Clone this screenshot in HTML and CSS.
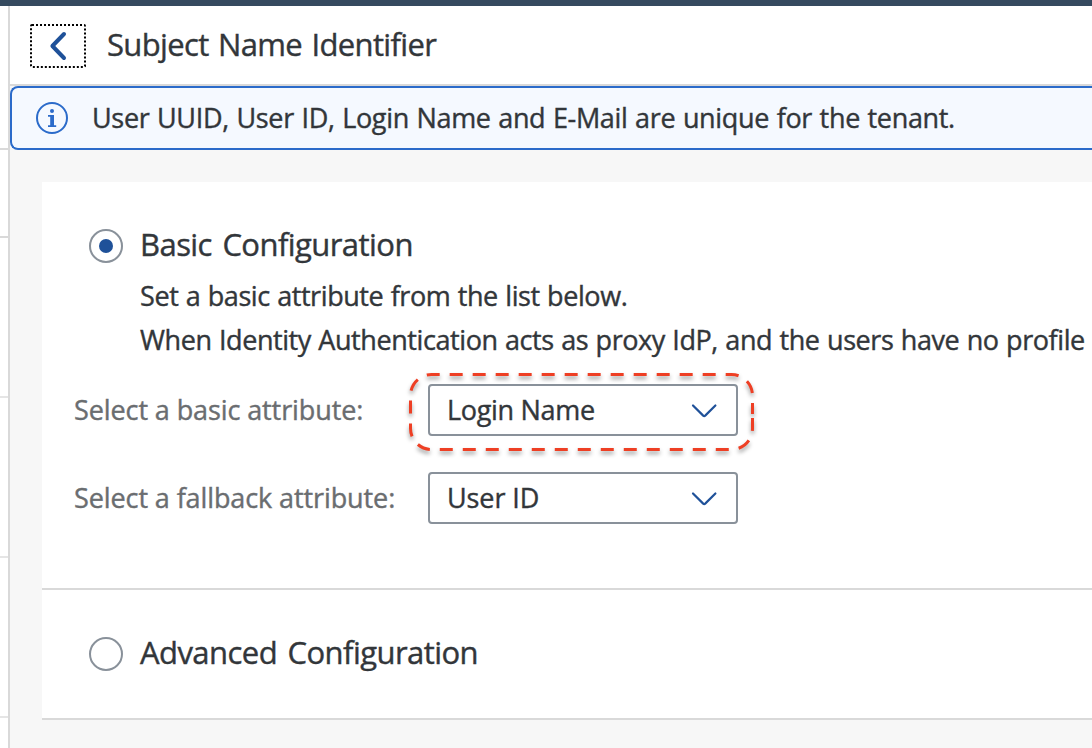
FILE: index.html
```html
<!DOCTYPE html>
<html lang="en">
<head>
<meta charset="utf-8">
<title>Subject Name Identifier</title>
<link rel="stylesheet" href="styles.css">
</head>
<body>
<div class="app">
  <div class="shellbar"></div>
  <div class="columns">
    <aside class="master">
      <div class="master-head"></div>
      <div class="master-item first"></div>
      <div class="master-item"></div>
      <div class="master-item"></div>
      <div class="master-item"></div>
    </aside>
    <main class="detail">
      <header class="page-header">
        <button class="back" aria-label="Back">
          <svg width="56" height="44" viewBox="0 0 56 44"><rect class="focus" x="1" y="1" width="54" height="42" rx="1"/><path class="back-arrow" d="M34 10 L22.4 22 L34 34"/></svg>
        </button>
        <h1 class="title"><span class="t-title">Subject Name Identifier</span></h1>
      </header>
      <div class="message">
        <svg class="info" width="32" height="32" viewBox="0 0 32 32"><circle cx="16" cy="16" r="15"/><circle class="dot" cx="16" cy="9" r="2"/><path d="M12 13h6v10.2h2.2V25H12v-1.8h2.2v-8.400H12z"/></svg>
        <span class="t-message">User UUID, User ID, Login Name and E-Mail are unique for the tenant.</span>
      </div>
      <div class="content">
        <section class="panel basic">
          <div class="option"><span class="radio on"></span><h2 class="heading"><span class="t-basic">Basic Configuration</span></h2></div>
          <p class="text"><span class="t-set">Set a basic attribute from the list below.</span></p>
          <p class="text"><span class="t-when">When Identity Authentication acts as proxy IdP, and the users have no profile</span></p>
          <div class="field">
            <label class="label"><span class="t-label1">Select a basic attribute:</span></label>
            <div class="select"><span class="t-login">Login Name</span>
              <svg class="chevron" width="28" height="16" viewBox="0 0 28 16"><path d="M3 3.500 L13.200 13.600 Q14.200 14.500 15.200 13.600 L25.400 3.500"/></svg>
              <svg class="highlight" width="352" height="90" viewBox="405 368 352 90"><path d="M752.5 418V428.5A21 21 0 0 1 731.5 449.5H431.5A21 21 0 0 1 410.5 428.5V395.5A21 21 0 0 1 431.5 374.5H731.5A21 21 0 0 1 752.5 395.5V414"/></svg>
            </div>
          </div>
          <div class="field">
            <label class="label"><span class="t-label2">Select a fallback attribute:</span></label>
            <div class="select"><span class="t-user">User ID</span>
              <svg class="chevron" width="28" height="16" viewBox="0 0 28 16"><path d="M3 3.500 L13.200 13.600 Q14.200 14.500 15.200 13.600 L25.400 3.500"/></svg>
            </div>
          </div>
        </section>
        <section class="panel advanced">
          <div class="option"><span class="radio"></span><h2 class="heading"><span class="t-adv">Advanced Configuration</span></h2></div>
        </section>
      </div>
    </main>
  </div>
</div>
</body>
</html>
```
FILE: styles.css
```css
* { box-sizing: border-box; }
body { margin: 0; overflow: hidden; background: #fff; color: #32363a; font-family: "Open Sans", "Noto Sans", sans-serif; font-size: 27px; -webkit-text-stroke: .4px; }
.app { display: flex; flex-direction: column; width: 1092px; height: 748px; overflow: hidden; }
.shellbar { flex: none; height: 6px; background: #354a5f; }
.columns { display: flex; flex: 1; min-height: 0; }
.master { flex: none; width: 10px; border-right: 2px solid #d9d9d9; background: #fff; }
.master-head { height: 144px; border-bottom: 2px solid #d9d9d9; }
.master-item { height: 160px; border-bottom: 2px solid #e5e5e5; }
.master-item.first { height: 88px; border-color: #d9d9d9; }
.detail { flex: 1; min-width: 0; display: flex; flex-direction: column; background: #f7f7f7; }
.page-header { flex: none; display: flex; align-items: center; gap: 21px; height: 80px; padding: 2px 0 0 20px; border-bottom: 2px solid #d9d9d9; background: #fff; }
.back { width: 56px; height: 44px; padding: 0; border: 0; background: none; }
.back svg, .info { display: block; }
.focus { fill: none; stroke: #000; stroke-width: 2; stroke-dasharray: 2 2; }
.back-arrow { fill: none; stroke: #1f5199; stroke-width: 4; stroke-linecap: round; stroke-linejoin: round; }
h1, h2, p { margin: 0; font-weight: 400; white-space: nowrap; }
.title, .heading { font-size: 31px; line-height: 40px; padding-bottom: 4px; }
.t-title { letter-spacing: -.65px; word-spacing: 2px; }
.t-basic, .t-adv { letter-spacing: -.56px; word-spacing: 3px; }
.t-message { letter-spacing: -.33px; word-spacing: .9px; }
.t-set, .t-when { letter-spacing: -.42px; word-spacing: .8px; }
.t-login { letter-spacing: -.3px; }
.t-label1, .t-label2, .t-user { letter-spacing: -.1px; }
.message { flex: none; display: flex; align-items: center; gap: 24px; height: 64px; padding-left: 24px; border: 2px solid #2b6bca; border-right: 0; border-radius: 8px 0 0 8px; background: #f5f9ff; white-space: nowrap; }
.info circle { fill: none; stroke: #2b6bca; stroke-width: 2; }
.info path, .info .dot { fill: #2b6bca; stroke: none; }
.content { padding: 32px 0 0 32px; }
.panel { background: #fff; border-bottom: 2px solid #d9d9d9; }
.basic { height: 408px; padding-top: 44px; }
.advanced { height: 130px; padding-top: 44px; }
.option { display: flex; align-items: center; gap: 17px; height: 40px; padding-left: 47px; }
.radio { flex: none; display: grid; place-items: center; width: 34px; height: 34px; border: 2px solid #89919a; border-radius: 50%; }
.radio.on::before { content: ""; width: 14px; height: 14px; border-radius: 50%; background: #1f5199; }
.text { padding-left: 98px; height: 44px; line-height: 44px; }
.option + .text { margin-top: 8px; }
.field { display: flex; align-items: center; height: 52px; padding-left: 32px; margin-top: 36px; }
.text + .field { margin-top: 22px; }
.label { width: 354px; color: #6a6d70; white-space: nowrap; }
.label span, .select span, .t-message { display: block; padding-bottom: 2px; }
.select { position: relative; display: flex; align-items: center; justify-content: space-between; width: 310px; height: 52px; padding: 0 18px 0 17px; border: 2px solid #89919a; border-radius: 4px; white-space: nowrap; }
.chevron path { fill: none; stroke: #1f5199; stroke-width: 2.2; stroke-linecap: round; stroke-linejoin: round; }
.highlight { position: absolute; left: -25px; top: -18px; overflow: visible; }
.highlight path { fill: none; stroke: #ee3f24; stroke-width: 3; stroke-dasharray: 13 10; filter: drop-shadow(0 3px 2px rgba(0,0,0,.4)); }
```
